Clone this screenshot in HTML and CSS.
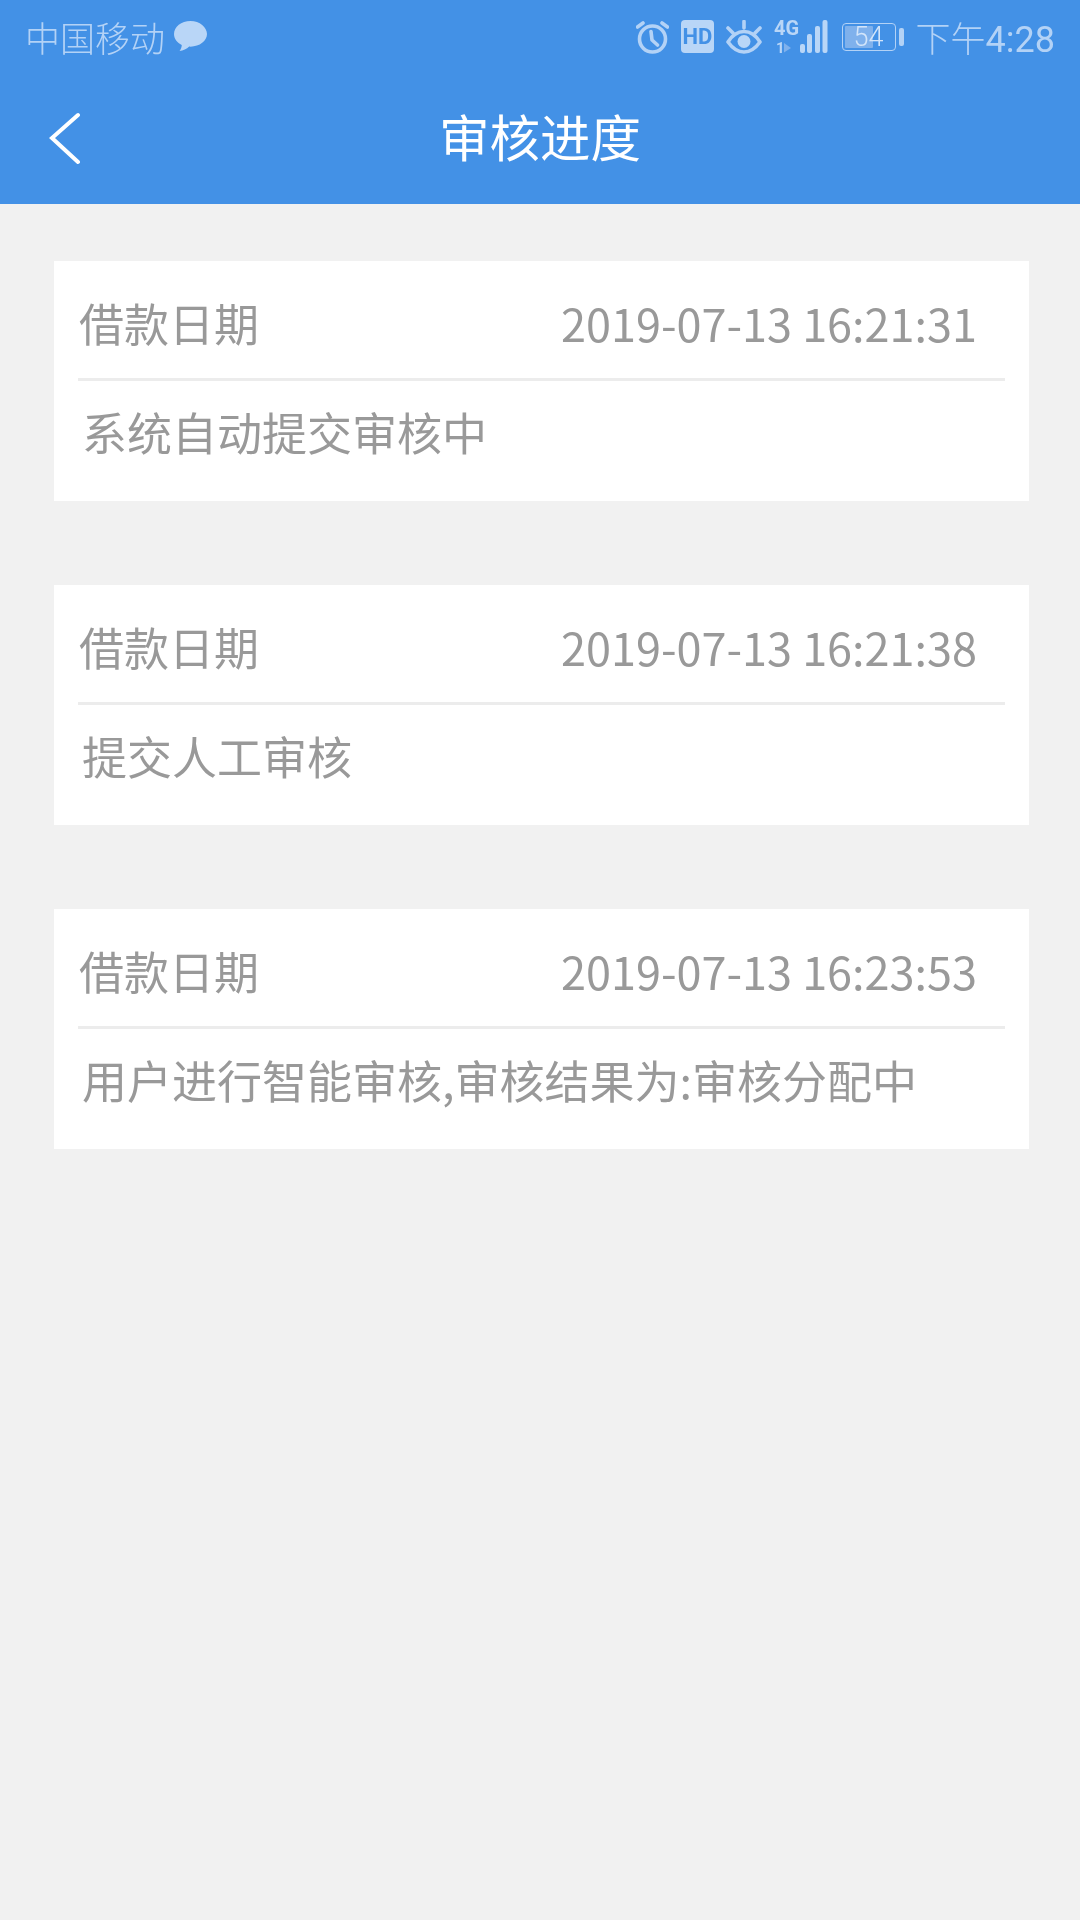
FILE: index.html
```html
<!DOCTYPE html>
<html lang="zh-CN">
<head>
<meta charset="utf-8">
<title>审核进度</title>
<link rel="stylesheet" href="styles.css">
</head>
<body>
<header class="top">
  <div class="status">
    <div class="status-left">
      <span class="carrier">中国移动</span>
      <svg class="chat" viewBox="0 0 36 34"><path d="M18 1C8.500 1 1 7 1 14.500c0 5 3.300 9 8 11.300 0 2.200-1 4.500-2.300 6.200 3.800-.5 7.300-2 10-4.600.4 0 .9.100 1.300.100 9.500 0 17-6 17-13S27.500 1 18 1z"/></svg>
    </div>
    <div class="status-right">
      <svg class="ic-alarm" viewBox="0 0 33 35"><circle cx="16.500" cy="20" r="13" class="ln"/><path class="ln" d="M15 12.500L16 21L21.500 26M1.500 8L7 4M31.500 8L26 4"/></svg>
      <svg class="ic-hd" viewBox="0 0 33 33"><rect width="33" height="33" rx="4" class="fill"/><text x="16.500" y="24" class="hd-text">HD</text></svg>
      <svg class="ic-eye" viewBox="0 0 36 34"><path class="ln" d="M2 22C7 14 12 11.500 18 11.500S29 14 34 22C29 29 24 32 18 32S7 29 2 22z"/><circle cx="18" cy="21.500" r="6.500" class="fill"/><path class="ln" d="M2 8L7 13M18 1.500V8M34 8L29 13"/></svg>
      <svg class="ic-signal" viewBox="0 0 54 33"><text x="0" y="14.500" class="net-text">4G</text><text x="2" y="32.500" class="net-small">1</text><path class="dim" d="M10 23L17 28L10 32.500z"/><rect x="26" y="24" width="5" height="9" rx="2" class="fill"/><rect x="33" y="14" width="5" height="19" rx="2" class="fill"/><rect x="41" y="6" width="5" height="27" rx="2" class="fill"/><rect x="48.500" y="0" width="5" height="33" rx="2" class="fill"/></svg>
      <div class="battery">
        <div class="cell"><span class="level"></span><span class="pct">54</span></div>
        <span class="nub"></span>
      </div>
      <span class="time"><span class="ampm">下午</span>4:28</span>
    </div>
  </div>
  <div class="nav">
    <svg class="back" viewBox="0 0 32 54"><path d="M30 4L4 27L30 51"/></svg>
    <h1 class="title">审核进度</h1>
  </div>
</header>
<main class="list">
  <section class="card">
    <div class="row"><span class="label">借款日期</span><span class="date">2019-07-13 16:21:31</span></div>
    <p class="desc">系统自动提交审核中</p>
  </section>
  <section class="card">
    <div class="row"><span class="label">借款日期</span><span class="date">2019-07-13 16:21:38</span></div>
    <p class="desc">提交人工审核</p>
  </section>
  <section class="card">
    <div class="row"><span class="label">借款日期</span><span class="date">2019-07-13 16:23:53</span></div>
    <p class="desc">用户进行智能审核,审核结果为:审核分配中</p>
  </section>
</main>
</body>
</html>
```
FILE: styles.css
```css
* { box-sizing: border-box; }
html, body { margin: 0; padding: 0; }
body {
  width: 1080px;
  height: 1920px;
  background: #f1f1f1;
  font-family: "Noto Sans CJK SC", "Noto Sans", sans-serif;
  overflow: hidden;
}
.top { background: #4391e6; height: 204px; display: flex; flex-direction: column; }
.status {
  height: 75px;
  display: flex;
  justify-content: space-between;
  align-items: center;
  padding: 0 25px 2px 25px;
  color: #b3d2f6;
  will-change: transform;
}
.status-left { display: flex; align-items: center; gap: 8px; }
.carrier { font-size: 35px; line-height: 40px; font-weight: 300; }
.chat { width: 35px; height: 33px; fill: #b9d6f7; }
.status-right { display: flex; align-items: center; }
.ln { fill: none; stroke: #b3d2f6; stroke-width: 3.600; stroke-linecap: round; stroke-linejoin: round; }
.fill { fill: #b9d6f7; }
.dim { fill: #7fb1ec; }
.hd-text { font: 700 22px "Liberation Sans Narrow", "Roboto", sans-serif; fill: #4391e6; text-anchor: middle; }
.net-text { font: 700 20px "Liberation Sans Narrow", "Roboto", sans-serif; fill: #b9d6f7; }
.net-small { font: 700 15px "Liberation Sans Narrow", "Roboto", sans-serif; fill: #b9d6f7; }
.ic-alarm { width: 33px; height: 35px; margin-right: 12px; }
.ic-hd { width: 33px; height: 33px; margin-right: 12px; }
.ic-eye { width: 36px; height: 34px; margin-right: 12px; }
.ic-signal { width: 54px; height: 33px; margin-right: 14px; overflow: visible; }
.battery { display: flex; align-items: center; gap: 3px; margin-right: 12px; }
.cell {
  position: relative;
  width: 54px;
  height: 28px;
  border: 1.500px solid #b3d2f6;
  border-radius: 4px;
  display: flex;
  align-items: center;
  justify-content: center;
}
.level { position: absolute; left: 2.500px; top: 2px; bottom: 2px; width: 28px; background: #7fb1ec; border-radius: 1px; }
.pct { position: relative; font: 300 27px/28px "Roboto", sans-serif; color: #d3e5fa; }
.nub { width: 5px; height: 18px; background: #b3d2f6; border-radius: 2px; }
.time { font: 400 36px/40px "Roboto", "Noto Sans CJK SC", sans-serif; margin-top: 3px; }
.ampm { font: 300 35px/40px "Noto Sans CJK SC", sans-serif; }
.nav { position: relative; flex: 1; display: flex; align-items: center; justify-content: center; padding: 0 0 10px 0; will-change: transform; }
.back { position: absolute; left: 48px; top: 36px; width: 32px; height: 54px; fill: none; stroke: #fff; stroke-width: 4; stroke-linecap: round; stroke-linejoin: miter; }
.title { margin: 0; font-size: 50.500px; line-height: 60px; font-weight: 400; color: #fff; }
.list { display: flex; flex-direction: column; gap: 84px; padding: 57px 51px 0 54px; will-change: transform; }
.card { background: #fff; height: 240px; padding: 0 24px; }
.row {
  height: 120px;
  border-bottom: 3px solid #ececec;
  display: flex;
  justify-content: space-between;
  align-items: center;
  padding: 7px 28px 0 1px;
  color: #999;
}
.label { font-size: 45px; line-height: 60px; font-weight: 400; }
.date { font-size: 45px; line-height: 60px; font-weight: 400; }
.desc { margin: 21px 0 0 4px; font-size: 45px; line-height: 60px; font-weight: 400; color: #999; white-space: nowrap; }
```
